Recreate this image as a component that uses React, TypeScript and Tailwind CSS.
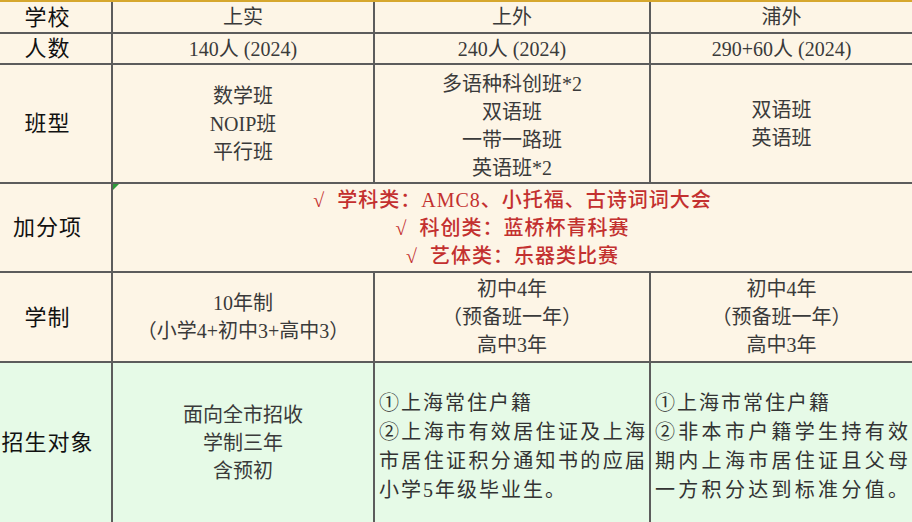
import React from 'react';

const font = { fontFamily: '"Liberation Serif", "Noto Sans CJK SC", serif' };

const Label = ({ children, green }: { children: React.ReactNode; green?: boolean }) => (
  <div
    className={`flex items-center justify-center pr-4 text-[22px] font-normal text-[#111] tracking-[1px] ${green ? 'bg-[#e6fae7]' : 'bg-[#fdf5e6]'}`}
  >
    {children}
  </div>
);

const Cell = ({ lines, green }: { lines: string[]; green?: boolean }) => (
  <div
    className={`flex flex-col items-center justify-center text-[20px] leading-[28px] text-[#3a3a3a] ${green ? 'bg-[#e6fae7]' : 'bg-[#fdf5e6]'}`}
  >
    {lines.map((l) => (
      <div key={l}>{l}</div>
    ))}
  </div>
);

const JustCell = ({ lines }: { lines: { t: string; full: boolean }[] }) => (
  <div className="flex flex-col justify-center bg-[#e6fae7] pl-1 pr-1 pt-2 text-[20px] leading-[29px] text-[#333]">
    {lines.map((l) => (
      <div key={l.t} className={l.full ? '[text-align-last:justify] text-justify' : 'tracking-[2px]'}>
        {l.t}
      </div>
    ))}
  </div>
);

export default function App() {
  return (
    <div className="w-[912px] h-[522px] overflow-hidden bg-[#fdf5e6]" style={font}>
      <div className="border-t-2 border-[#d6a72e]">
        <div className="grid grid-cols-[111px_260px_274px_261px] grid-rows-[30px_29px_117px_87px_88px_159px] gap-[2px] bg-[#5c5c5c]">
          <Label>学校</Label>
          <Cell lines={['上实']} />
          <Cell lines={['上外']} />
          <Cell lines={['浦外']} />

          <Label>人数</Label>
          <Cell lines={['140人 (2024)']} />
          <Cell lines={['240人 (2024)']} />
          <Cell lines={['290+60人 (2024)']} />

          <Label>班型</Label>
          <Cell lines={['数学班', 'NOIP班', '平行班']} />
          <div className="flex flex-col items-center justify-center bg-[#fdf5e6] pt-1 text-[20px] leading-[28px] text-[#3a3a3a]">
            <div>多语种科创班*2</div>
            <div>双语班</div>
            <div>一带一路班</div>
            <div>英语班*2</div>
          </div>
          <Cell lines={['双语班', '英语班']} />

          <Label>加分项</Label>
          <div className="relative col-span-3 flex flex-col items-center justify-center bg-[#fdf5e6] text-[20px] leading-[28px] font-medium tracking-[1px] text-[#c3302f]">
            <span className="absolute left-0 top-0 h-0 w-0 border-r-[6px] border-t-[6px] border-r-transparent border-t-[#2e9a3a]" />
            <div>√&nbsp; 学科类：AMC8、小托福、古诗词词大会</div>
            <div>√&nbsp; 科创类：蓝桥杯青科赛</div>
            <div>√&nbsp; 艺体类：乐器类比赛</div>
          </div>

          <Label>学制</Label>
          <Cell lines={['10年制', '（小学4+初中3+高中3）']} />
          <Cell lines={['初中4年', '（预备班一年）', '高中3年']} />
          <Cell lines={['初中4年', '（预备班一年）', '高中3年']} />

          <Label green>招生对象</Label>
          <Cell green lines={['面向全市招收', '学制三年', '含预初']} />
          <JustCell
            lines={[
              { t: '①上海常住户籍', full: false },
              { t: '②上海市有效居住证及上海', full: true },
              { t: '市居住证积分通知书的应届', full: true },
              { t: '小学5年级毕业生。', full: false },
            ]}
          />
          <JustCell
            lines={[
              { t: '①上海市常住户籍', full: false },
              { t: '②非本市户籍学生持有效', full: true },
              { t: '期内上海市居住证且父母', full: true },
              { t: '一方积分达到标准分值。', full: true },
            ]}
          />
        </div>
      </div>
    </div>
  );
}
